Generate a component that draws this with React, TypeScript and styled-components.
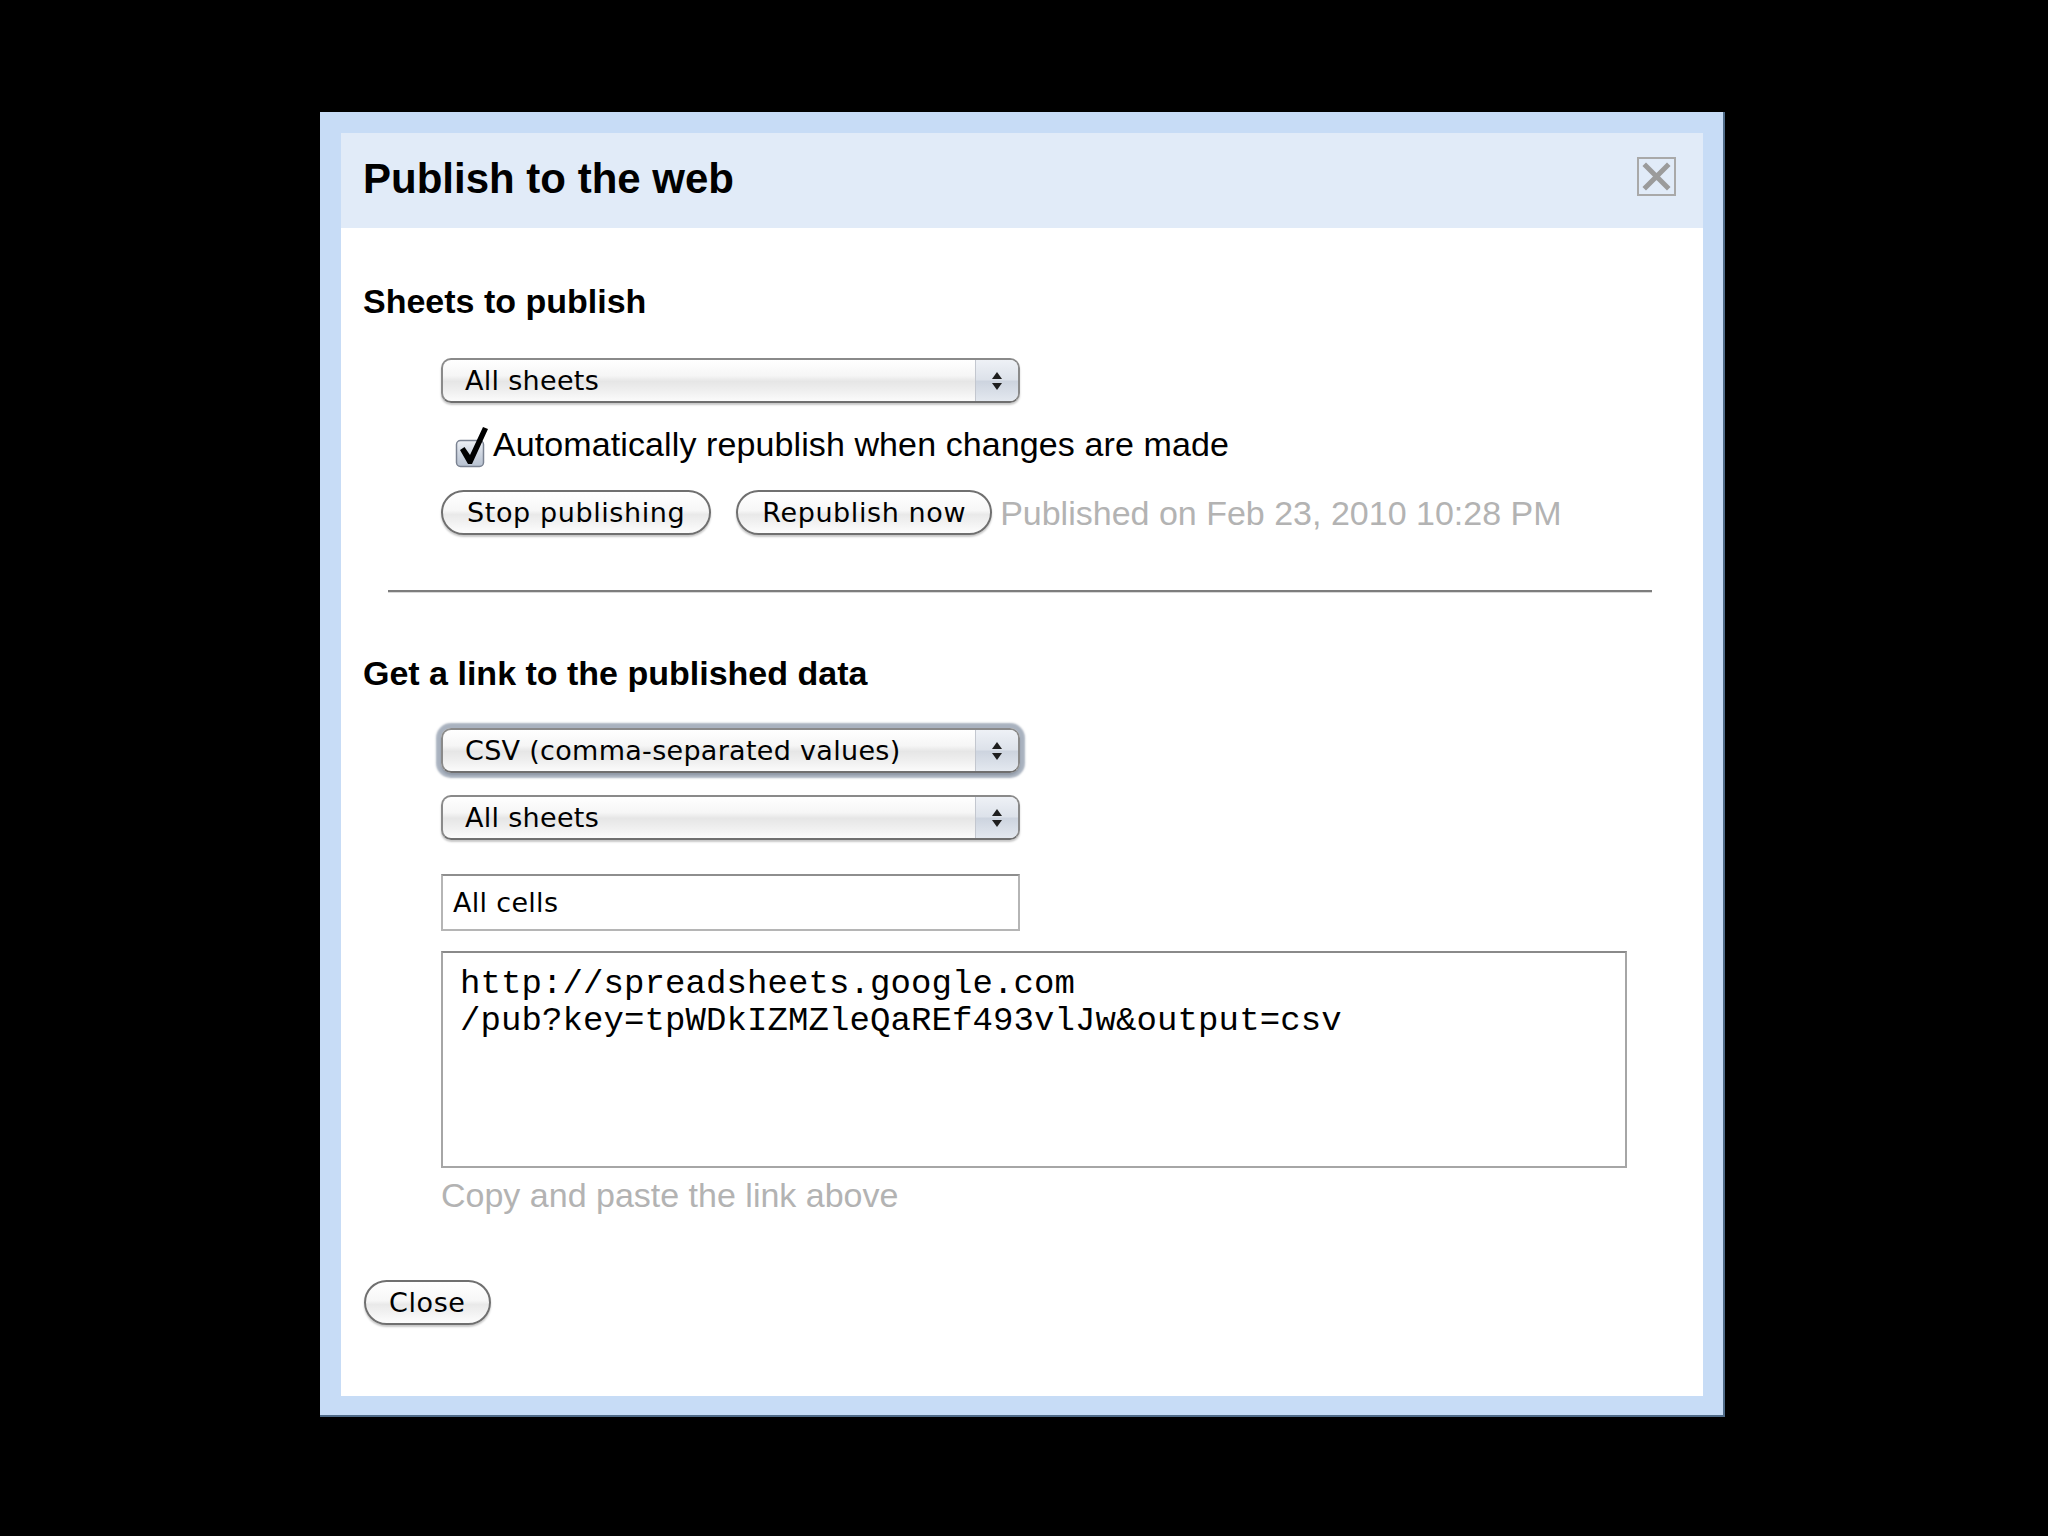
import React from "react";
import styled, { createGlobalStyle } from "styled-components";

const GlobalStyle = createGlobalStyle`
  html, body {
    margin: 0;
    padding: 0;
    background: #000;
  }
  body {
    width: 2048px;
    height: 1536px;
    overflow: hidden;
  }
  * { box-sizing: border-box; }
`;

const ui = `"DejaVu Sans", Verdana, sans-serif`;
const helv = `"Liberation Sans", Arial, Helvetica, sans-serif`;

const Page = styled.div`
  width: 2048px;
  height: 1536px;
  background: #000;
  padding: 112px 0 0 320px;
`;

const Dialog = styled.div`
  width: 1405px;
  background: #c7dcf6;
  padding: 21px 20px 19px 21px;
  border-right: 2px solid #4f6b88;
  border-bottom: 2px solid #4f6b88;
`;

const Panel = styled.div`
  background: #fff;
  display: flex;
  flex-direction: column;
  height: 1263px;
`;

const Header = styled.div`
  height: 95px;
  flex: none;
  background: #e1ebf8;
  display: flex;
  justify-content: space-between;
  align-items: flex-start;
  padding: 0 27px 0 22px;
`;

const Title = styled.h1`
  margin: 22px 0 0;
  font: bold 42px/48px ${helv};
  color: #000;
`;

const CloseBox = styled.div`
  margin-top: 24px;
  width: 39px;
  height: 39px;
  border: 2px solid #a9a9a9;
  display: flex;
  align-items: center;
  justify-content: center;
`;

const Body = styled.div`
  padding: 53px 0 69px 22px;
  display: flex;
  flex-direction: column;
  align-items: flex-start;
`;

const SectionTitle = styled.h2<{ $top?: number }>`
  margin: ${(p) => p.$top ?? 0}px 0 0;
  font: bold 34px/40px ${helv};
  color: #000;
`;

const Indent = styled.div`
  margin-left: 78px;
  display: flex;
  flex-direction: column;
  align-items: flex-start;
`;

const SelectBox = styled.div<{ $top: number; $focused?: boolean }>`
  margin-top: ${(p) => p.$top}px;
  width: 579px;
  height: 45px;
  display: flex;
  align-items: stretch;
  border: 2px solid #8a8a8a;
  border-bottom-color: #6f6f6f;
  border-radius: 10px;
  overflow: hidden;
  background: linear-gradient(
    to bottom,
    #ffffff 0%,
    #f6f6f6 38%,
    #e6e6e6 52%,
    #efefef 75%,
    #fbfbfb 100%
  );
  box-shadow: ${(p) =>
    p.$focused
      ? "0 0 2px 5px rgba(112, 126, 148, 0.6), 0 2px 2px rgba(0,0,0,0.25)"
      : "0 2px 2px rgba(0, 0, 0, 0.22)"};
`;

const SelectLabel = styled.div`
  flex: 1;
  display: flex;
  align-items: center;
  padding-left: 22px;
  font: 27px/1 ${ui};
  letter-spacing: 0.3px;
  color: #000;
`;

const SelectArrows = styled.div`
  width: 43px;
  flex: none;
  display: flex;
  align-items: center;
  justify-content: center;
  border-left: 1px solid #c3c7cf;
  background: linear-gradient(to bottom, #eef1f6 0%, #dde2ea 48%, #cdd4df 52%, #e3e8ef 100%);
`;

const CheckRow = styled.div`
  margin-top: 21px;
  height: 44px;
  display: flex;
  align-items: flex-start;
`;

const CheckIcon = styled.svg`
  margin-left: 12px;
  flex: none;
`;

const CheckLabel = styled.span`
  margin-left: 4px;
  margin-top: -2px;
  font: 34px/44px ${helv};
  letter-spacing: 0.1px;
  color: #000;
  white-space: nowrap;
`;

const ButtonRow = styled.div`
  margin-top: 22px;
  display: flex;
  align-items: center;
`;

const PillButton = styled.div<{ $gap?: number }>`
  height: 45px;
  margin-right: ${(p) => p.$gap ?? 0}px;
  padding: 0 24px;
  display: flex;
  align-items: center;
  border: 2px solid #707070;
  border-radius: 23px;
  background: linear-gradient(
    to bottom,
    #ffffff 0%,
    #f7f7f7 45%,
    #e9e9e9 55%,
    #f4f4f4 80%,
    #fdfdfd 100%
  );
  box-shadow: 0 2px 2px rgba(0, 0, 0, 0.22);
  font: 27px/1 ${ui};
  letter-spacing: 0.6px;
  color: #000;
  white-space: nowrap;
`;

const Muted = styled.span<{ $top?: number }>`
  margin-top: ${(p) => p.$top ?? 0}px;
  font: 34px/40px ${helv};
  color: #b3b3b3;
  white-space: nowrap;
`;

const Divider = styled.div`
  margin: 55px 0 0 25px;
  width: 1264px;
  height: 0;
  border-top: 2px solid #7d7d7d;
  box-shadow: 0 1px 0 #d8d8d8;
`;

const TextField = styled.div`
  margin-top: 34px;
  width: 579px;
  height: 57px;
  display: flex;
  align-items: center;
  padding-left: 10px;
  border: 2px solid #b5b5b5;
  border-top-color: #8e8e8e;
  background: #fff;
  font: 27px/1 ${ui};
  letter-spacing: 0.3px;
  color: #000;
`;

const LinkBox = styled.div`
  margin-top: 20px;
  width: 1186px;
  height: 217px;
  padding: 13px 17px;
  border: 2px solid #a6a6a6;
  border-top-color: #8a8a8a;
  background: #fff;
  font: 34px/37px "Liberation Mono", "Courier New", monospace;
  letter-spacing: 0.1px;
  color: #000;
  white-space: pre;
`;

const CloseButton = styled(PillButton)`
  margin-top: 65px;
  margin-left: 1px;
  padding: 0 23px;
`;

function ArrowsIcon() {
  return (
    <svg width="12" height="20" viewBox="0 0 12 20">
      <path d="M6 1 L11 8 L1 8 Z" fill="#1e1e1e" />
      <path d="M1 12 L11 12 L6 19 Z" fill="#1e1e1e" />
    </svg>
  );
}

function Select({ label, top, focused }: { label: string; top: number; focused?: boolean }) {
  return (
    <SelectBox $top={top} $focused={focused}>
      <SelectLabel>{label}</SelectLabel>
      <SelectArrows>
        <ArrowsIcon />
      </SelectArrows>
    </SelectBox>
  );
}

function CloseX() {
  return (
    <svg width="31" height="31" viewBox="0 0 31 31">
      <path
        d="M5 5 L26 26 M26 5 L5 26"
        stroke="#9b9b9b"
        strokeWidth="5"
        strokeLinecap="square"
        fill="none"
      />
    </svg>
  );
}

function Checkbox() {
  return (
    <CheckIcon width="36" height="46" viewBox="0 0 36 46">
      <defs>
        <linearGradient id="cbfill" x1="0" y1="0" x2="0" y2="1">
          <stop offset="0" stopColor="#eef1f6" />
          <stop offset="0.5" stopColor="#cfd6e1" />
          <stop offset="1" stopColor="#b7c1d0" />
        </linearGradient>
      </defs>
      <rect x="3.5" y="16.5" width="27" height="26" rx="4" fill="url(#cbfill)" stroke="#7b8392" strokeWidth="1.5" />
      <path d="M7 26 L11.5 23 L17 31 L30 3 L35 5 L19 40 L15 40 Z" fill="#000" />
    </CheckIcon>
  );
}

export default function App() {
  return (
    <>
      <GlobalStyle />
      <Page>
        <Dialog>
          <Panel>
            <Header>
              <Title>Publish to the web</Title>
              <CloseBox>
                <CloseX />
              </CloseBox>
            </Header>
            <Body>
              <SectionTitle>Sheets to publish</SectionTitle>
              <Indent>
                <Select label="All sheets" top={37} />
                <CheckRow>
                  <Checkbox />
                  <CheckLabel>Automatically republish when changes are made</CheckLabel>
                </CheckRow>
                <ButtonRow>
                  <PillButton $gap={25}>Stop publishing</PillButton>
                  <PillButton $gap={8}>Republish now</PillButton>
                  <Muted>Published on Feb 23, 2010 10:28 PM</Muted>
                </ButtonRow>
              </Indent>
              <Divider />
              <SectionTitle $top={61}>Get a link to the published data</SectionTitle>
              <Indent>
                <Select label="CSV (comma-separated values)" top={35} focused />
                <Select label="All sheets" top={22} />
                <TextField>All cells</TextField>
                <LinkBox>
                  {"http://spreadsheets.google.com\n/pub?key=tpWDkIZMZleQaREf493vlJw&output=csv"}
                </LinkBox>
                <Muted $top={7}>Copy and paste the link above</Muted>
              </Indent>
              <CloseButton>Close</CloseButton>
            </Body>
          </Panel>
        </Dialog>
      </Page>
    </>
  );
}
